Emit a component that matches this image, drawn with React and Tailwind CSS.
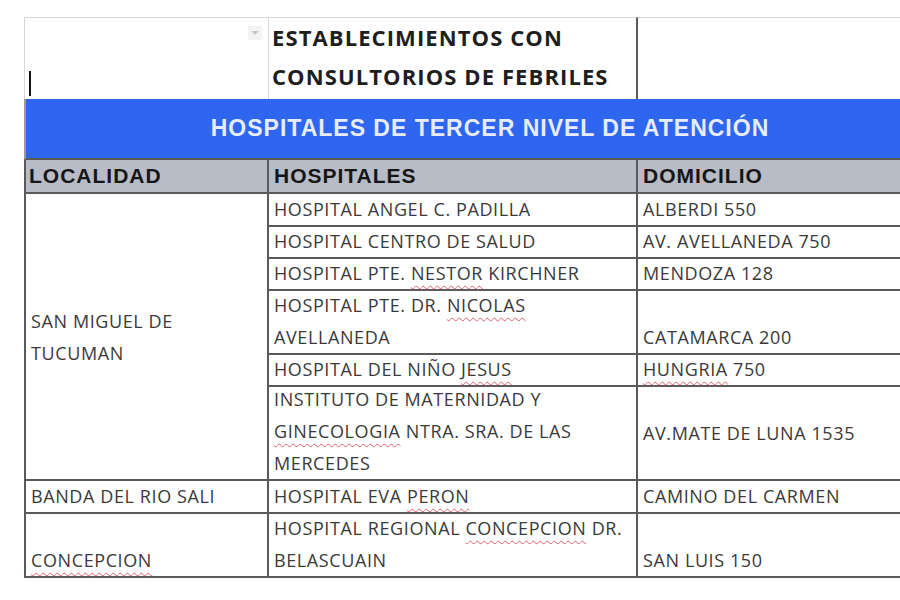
const body = "font-['Open_Sans',sans-serif] text-[18px] tracking-[0.6px] text-[#3a3a3a] leading-[32px] px-[5px]";
const line = "border-[#5a5a5a]";

function Sq({ children }) {
  return (
    <span className="underline decoration-wavy decoration-[#e0606a] decoration-1 underline-offset-[5px]">
      {children}
    </span>
  );
}

function Cell({ children, className = "" }) {
  return (
    <div className={`flex border-r-2 border-b-2 ${line} ${body} ${className}`}>
      <div className="whitespace-nowrap">{children}</div>
    </div>
  );
}

export default function App() {
  const rows = [
    {
      h: <>HOSPITAL ANGEL C. PADILLA</>,
      d: "ALBERDI 550",
      a: "items-end",
    },
    { h: <>HOSPITAL CENTRO DE SALUD</>, d: "AV. AVELLANEDA 750", a: "items-end" },
    {
      h: (
        <>
          HOSPITAL PTE. <Sq>NESTOR</Sq> KIRCHNER
        </>
      ),
      d: "MENDOZA 128",
      a: "items-end",
    },
    {
      h: (
        <>
          HOSPITAL PTE. DR. <Sq>NICOLAS</Sq>
          <br />
          AVELLANEDA
        </>
      ),
      d: "CATAMARCA 200",
      a: "items-end",
    },
    {
      h: (
        <>
          HOSPITAL DEL NIÑO <Sq>JESUS</Sq>
        </>
      ),
      d: (
        <>
          <Sq>HUNGRIA</Sq> 750
        </>
      ),
      a: "items-end",
    },
    {
      h: (
        <>
          INSTITUTO DE MATERNIDAD Y
          <br />
          <Sq>GINECOLOGIA</Sq> NTRA. SRA. DE LAS
          <br />
          MERCEDES
        </>
      ),
      d: "AV.MATE DE LUNA 1535",
      a: "items-center",
    },
  ];

  return (
    <div className="w-[900px] h-[600px] overflow-hidden bg-white pt-[17px] pl-[24px]">
      <div className="grid grid-cols-[245px_369px_320px] grid-rows-[82px_61px_34px_33px_32px_32px_64px_32px_94px_33px_64px]">
        {/* title row */}
        <div className="relative border-t border-l border-r border-[#d8d8d8]">
          <div className="absolute right-[6px] top-[8px] w-[14px] h-[14px] bg-[#f4f4f4] flex items-center justify-center">
            <div className="w-0 h-0 border-l-[4px] border-r-[4px] border-t-[4px] border-l-transparent border-r-transparent border-t-[#c8c8c8]" />
          </div>
          <div className="absolute left-[4px] bottom-[3px] w-[2px] h-[25px] bg-[#111]" />
        </div>
        <div className={`flex items-end border-t border-t-[#d8d8d8] border-r-2 ${line} px-[3px] pb-[3px]`}>
          <div className="font-['Open_Sans',sans-serif] font-bold text-[22px] leading-[39px] text-[#1e1e1e] tracking-[1.1px] whitespace-nowrap">
            ESTABLECIMIENTOS CON
            <br />
            CONSULTORIOS DE FEBRILES
          </div>
        </div>
        <div className="border-t border-[#d8d8d8]" />

        {/* blue band */}
        <div className={`col-span-3 flex items-center justify-center bg-[#2f66f0] border-l-2 border-b-2 border-l-[#9a9a9a] ${line}`}>
          <span className="font-['Liberation_Sans',Arial,sans-serif] font-bold text-[23px] tracking-[1px] text-[#e6ecfb] pr-[4px]">
            HOSPITALES DE TERCER NIVEL DE ATENCIÓN
          </span>
        </div>

        {/* header */}
        {["LOCALIDAD", "HOSPITALES", "DOMICILIO"].map((t, i) => (
          <div
            key={t}
            className={`flex items-center bg-[#b8bcc6] border-r-2 border-b-2 ${line} ${i === 0 ? "border-l-2 pl-[3px]" : "pl-[5px]"}`}
          >
            <span className="font-['Liberation_Sans',Arial,sans-serif] font-bold text-[21px] tracking-[1px] text-[#161616]">
              {t}
            </span>
          </div>
        ))}

        {/* body */}
        <Cell className="row-span-6 border-l-2 items-center">
          SAN MIGUEL DE
          <br />
          TUCUMAN
        </Cell>
        {rows.map((r, i) => (
          <div key={i} className="contents">
            <Cell className="items-end">{r.h}</Cell>
            <Cell className={r.a}>{r.d}</Cell>
          </div>
        ))}

        <Cell className="border-l-2 items-end">BANDA DEL RIO SALI</Cell>
        <Cell className="items-end">
          HOSPITAL EVA <Sq>PERON</Sq>
        </Cell>
        <Cell className="items-end">CAMINO DEL CARMEN</Cell>

        <Cell className="border-l-2 items-end">
          <Sq>CONCEPCION</Sq>
        </Cell>
        <Cell className="items-end">
          HOSPITAL REGIONAL <Sq>CONCEPCION</Sq> DR.
          <br />
          BELASCUAIN
        </Cell>
        <Cell className="items-end">SAN LUIS 150</Cell>
      </div>
    </div>
  );
}
